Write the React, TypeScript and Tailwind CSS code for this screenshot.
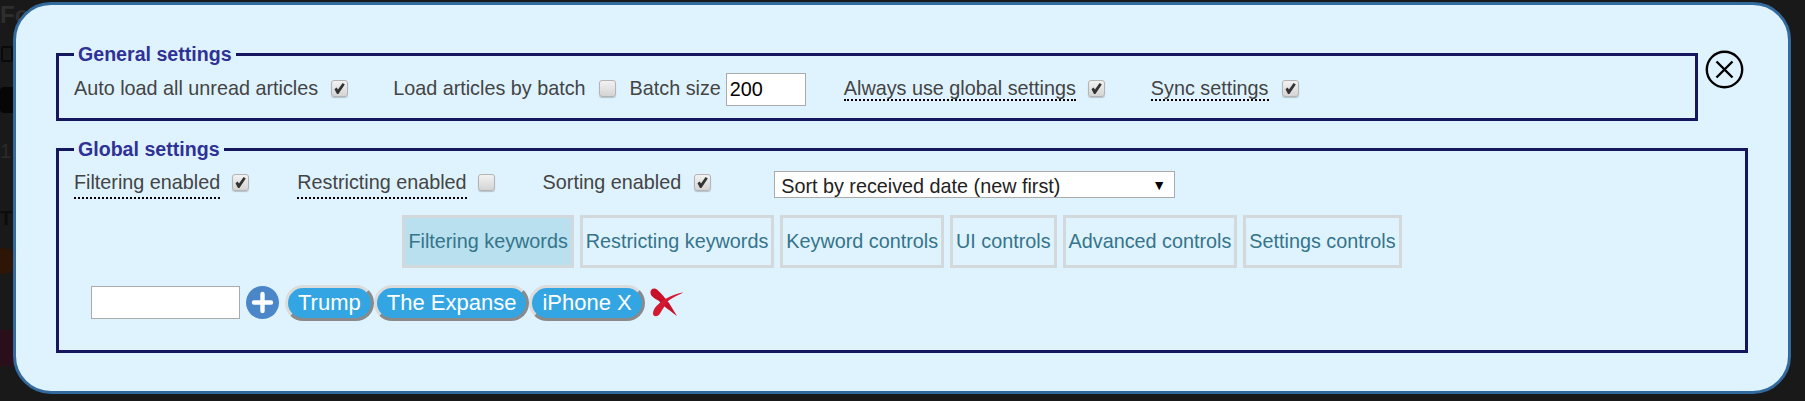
import { ReactNode } from 'react'

const labelFont = { fontFamily: '"Liberation Sans", Arial, sans-serif' }

function Check({ checked, className = '' }: { checked?: boolean; className?: string }) {
  return (
    <span className={`flex h-[17px] w-[17px] shrink-0 items-center justify-center rounded-[3px] border border-[#b4b4b4] bg-gradient-to-b from-[#f2f2f2] to-[#d4d4d4] shadow-[0_1px_1px_rgba(0,0,0,0.2)] ${className}`}>
      {checked && (
        <svg width="13" height="13" viewBox="0 0 13 13">
          <path d="M1.5 7.2 L3.6 5.6 L5 7.6 L9.6 1 L11.8 2.4 L5.4 12 L4 12 Z" fill="#333" />
        </svg>
      )}
    </span>
  )
}

function Dotted({ children }: { children: ReactNode }) {
  return <span className="mb-[-2px] border-b-2 border-dotted border-black">{children}</span>
}

function Group({ title, className, children }: { title: string; className: string; children: ReactNode }) {
  return (
    <fieldset className={`border-[3px] border-[#16165e] px-[15px] ${className}`}>
      <legend className="px-[4px] text-[19.6px] leading-[21px] font-bold text-[#2f3196]">{title}</legend>
      {children}
    </fieldset>
  )
}

function Tab({ label, active }: { label: string; active?: boolean }) {
  return (
    <div className={`flex h-[53px] items-center border-[3px] border-[#d3d8da] px-[3px] text-[19.8px] text-[#35748a] ${active ? 'bg-[#b8e0ee]' : ''}`}>
      {label}
    </div>
  )
}

function Tag({ label }: { label: string }) {
  return (
    <div className="flex h-[36px] items-center rounded-full border-[3px] border-t-[#dcdcdc] border-r-[#8a8a8a] border-b-[#8a8a8a] border-l-[#dcdcdc] bg-[#33a5e3] px-[10px] pb-[1px] text-[22px] text-white">
      {label}
    </div>
  )
}

export default function App() {
  return (
    <div className="relative h-[401px] w-[1805px] overflow-hidden bg-[#191919] pt-[2px] pl-[13px]" style={labelFont}>
      {/* dimmed page behind the dialog */}
      <span className="absolute top-[-3px] left-0 text-[24px] font-bold text-[#2e2e2e]">Fo</span>
      <span className="absolute top-[46px] left-[1px] h-[16px] w-[12px] rounded-[2px] border-2 border-[#0a0a0a]" />
      <span className="absolute top-[87px] left-0 h-[26px] w-[14px] rounded-l-[4px] bg-[#060606]" />
      <span className="absolute top-[136px] left-0 text-[20px] text-[#2c2c2c]">1</span>
      <span className="absolute top-[203px] left-0 text-[20px] font-bold text-[#0c0c0c]">T</span>
      <span className="absolute top-[248px] left-[-10px] h-[26px] w-[26px] rounded-full bg-[#2e1506]" />
      <span className="absolute top-[330px] left-0 h-[36px] w-[14px] bg-[#2a0e1a]" />

      <div className="relative h-[392px] w-[1778px] rounded-[38px] border-[3px] border-[#336a9e] bg-[#dff3ff] pt-[39px] pl-[40px]">
        <div className="flex items-start">
          <Group title="General settings" className="h-[77px] w-[1642px]">
            <div className="flex items-center pt-[6px] text-[19.8px] text-[#444]">
              <span>Auto load all unread articles</span>
              <Check checked className="ml-[13px]" />
              <span className="ml-[45px]">Load articles by batch</span>
              <Check className="ml-[13px]" />
              <span className="ml-[14px]">Batch size</span>
              <input
                readOnly
                value="200"
                className="mt-[2px] ml-[5px] h-[33px] w-[80px] border border-[#aaa] bg-white pl-[3px] text-[19.8px] text-black"
              />
              <span className="ml-[38px]"><Dotted>Always use global settings</Dotted></span>
              <Check checked className="ml-[12px]" />
              <span className="ml-[46px]"><Dotted>Sync settings</Dotted></span>
              <Check checked className="ml-[13px]" />
            </div>
          </Group>
          {/* close */}
          <svg className="mt-[6px] ml-[7px]" width="39" height="39" viewBox="0 0 39 39">
            <circle cx="19.5" cy="19.5" r="17.7" fill="none" stroke="#000" strokeWidth="2.4" />
            <path d="M11.5 11.5 L27.5 27.5 M27.5 11.5 L11.5 27.5" stroke="#000" strokeWidth="2.4" />
          </svg>
        </div>

        <Group title="Global settings" className="mt-[18px] h-[214px] w-[1692px]">
          <div className="mt-[9px] flex h-[27px] items-center text-[19.8px] text-[#444]">
            <span className="flex"><Dotted>Filtering enabled</Dotted></span>
            <Check checked className="ml-[12px]" />
            <span className="ml-[48px] flex"><Dotted>Restricting enabled</Dotted></span>
            <Check className="ml-[11px]" />
            <span className="ml-[48px]">Sorting enabled</span>
            <Check checked className="ml-[13px]" />
            <div className="relative mt-[8px] ml-[63px]">
              <select className="h-[27px] w-[401px] appearance-none rounded-none border border-[#aaa] bg-white pl-[6px] text-[19.8px] text-[#222]">
                <option>Sort by received date (new first)</option>
              </select>
              <span className="pointer-events-none absolute top-[4px] right-[9px] text-[14px] text-black">▼</span>
            </div>
          </div>

          <div className="mt-[19px] flex justify-center gap-[6px]">
            <Tab label="Filtering keywords" active />
            <Tab label="Restricting keywords" />
            <Tab label="Keyword controls" />
            <Tab label="UI controls" />
            <Tab label="Advanced controls" />
            <Tab label="Settings controls" />
          </div>

          <div className="mt-[16px] ml-[17px] flex items-center">
            <input readOnly className="h-[33px] w-[149px] border border-[#aaa] bg-white" />
            <svg className="mx-[6px]" width="33" height="33" viewBox="0 0 33 33">
              <circle cx="16.5" cy="16.5" r="16.5" fill="#4a86c8" />
              <path d="M16.5 8 V25 M8 16.5 H25" stroke="#fff" strokeWidth="4.4" strokeLinecap="round" />
            </svg>
            <div className="mt-[1px] flex">
              <Tag label="Trump" />
              <Tag label="The Expanse" />
              <Tag label="iPhone X" />
            </div>
            <svg className="ml-[4px]" width="36" height="32" viewBox="8 7 36 32">
              <path d="M9.5 13 C9 9 13 7.5 16 9.5 C20 13 25 19 28 23 L36 36 C31 32 22 26 18 21 C15 19 10 17 9.5 13 Z" fill="#c8102a" />
              <path d="M42.5 12.5 C37 15 31 18 27 21 C24 26 21 30 19 33.5 C17 37 12 37 12 33.5 C12 28 18 23 24 19 C30 16 37 13 42.5 12.5 Z" fill="#d31a30" />
            </svg>
          </div>
        </Group>
      </div>
    </div>
  )
}
